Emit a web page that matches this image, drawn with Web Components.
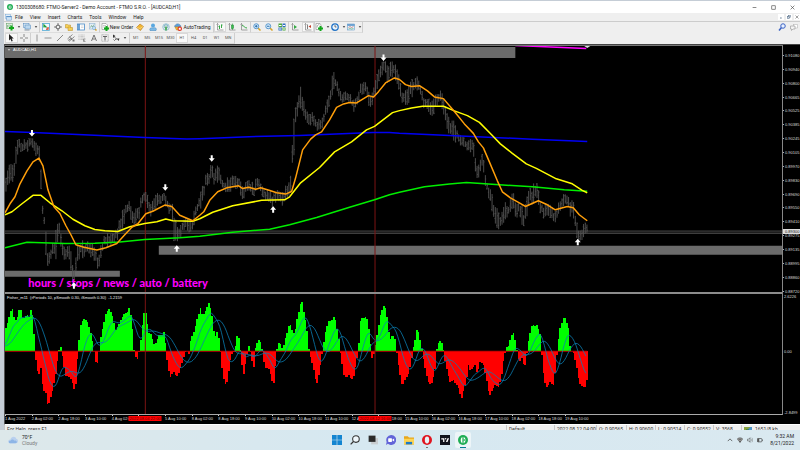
<!DOCTYPE html>
<html lang="en">
<head>
<meta charset="utf-8">
<title>FTMO-Server2 - [AUDCAD,H1]</title>
<style>
html, body { margin: 0; height: 100%; }
body { font: 5px/6px Roboto, "Noto Sans", sans-serif; color: #222; background: #c5cdd6; }
</style>
</head>
<body>
<desk-top></desk-top>
<script>
const define = (name, html) => customElements.define(name, class extends HTMLElement {
  connectedCallback() {
    if (this.shadowRoot) return;
    const root = this.attachShadow({ mode: "open" });
    const t = document.createElement("template");
    t.innerHTML = "<style>*{box-sizing:border-box}button{font:inherit;color:inherit;background:none;border:0;padding:0;margin:0}</style>" +
      (typeof html === "function" ? html(this) : html);
    root.append(t.content.cloneNode(true));
  }
});

/* ---------- icons, drawn on a 16 x 16 grid ---------- */
const glass = s => `<path d="M10 10l5 5" stroke="#d6a326" stroke-width="3"/><circle cx="6.5" cy="6.5" r="5" fill="#d5ebfa" stroke="#3f87c4" stroke-width="1.6"/><path d="${s}" stroke="#1d62a8" stroke-width="1.8"/>`;
const plus = (x, y) => `<path d="M${x} ${y - 5}v10M${x - 5} ${y}h10" stroke="#12a81c" stroke-width="4"/>`;
const axes = `<path d="M3 1v13h12M1 3l2-2 2 2" fill="none" stroke="#777" stroke-width="1.3"/>`;
const I = {
  logo: `<circle cx="8" cy="8" r="8" fill="#1fae55"/><path d="M7 3C3.500 4 3.500 12 7 13zM9 3c4 1 4 9 0 10z" fill="#fff"/><path d="M9 6l3 2-3 2z" fill="#1fae55"/>`,
  child: `<rect x="1" y="1" width="11" height="9" fill="#e8f3fc" stroke="#6ba2d6"/><rect x="4" y="5" width="11" height="9" fill="#cfe3f5" stroke="#4b86c3"/><path d="M4 6h11" stroke="#4b86c3" stroke-width="2"/>`,
  newchart: `<rect x="1" y="1" width="12" height="10" fill="#dff0df" stroke="#5a9a60"/><path d="M3 9V4m3 4V3m3 4V4" stroke="#4a8a50"/>${plus(11, 10)}`,
  profile: `<rect x="1" y="1" width="11" height="8" fill="#d9e9f7" stroke="#4c86bd"/><rect x="4" y="4" width="11" height="8" fill="#bcd8ef" stroke="#4c86bd"/><path d="M3 14h10" stroke="#8b98a5" stroke-width="2"/>`,
  market: `<rect x="1" y="1" width="14" height="14" fill="#eef8fd" stroke="#4aa6d2" stroke-width="1.500"/><path d="M4 9V4l5 5" stroke="#1b9b33" stroke-width="2.5" fill="none"/><path d="M12 8v4H8" stroke="#d63b24" stroke-width="2.500" fill="none"/>`,
  target: `<circle cx="8" cy="8" r="4" fill="none" stroke="#555" stroke-width="1.6"/><path d="M8 0v6M8 10v6M0 8h6M10 8h6" stroke="#555" stroke-width="1.5"/>`,
  navigator: `<path d="M1 3h4l1 1h5v6H1z" fill="#f5cf58" stroke="#b98a1d"/><path d="M6 8h4l1 1h4v6H6z" fill="#f5cf58" stroke="#b98a1d"/>`,
  terminal: `<rect x="1" y="2" width="14" height="12" fill="#fff" stroke="#3f84c4" stroke-width="1.500"/><path d="M4 2v12" stroke="#3f84c4" stroke-width="3"/><path d="M8 6h5M8 9h5" stroke="#bbb"/>`,
  tester: `<rect x="1" y="1" width="11" height="11" fill="#e1eef8" stroke="#7ea9cd"/><path d="M3 9l2-4 2 3 3-5" stroke="#4b8a4b" fill="none"/><path d="M12 12l3 3" stroke="#d6a326" stroke-width="3"/><circle cx="10" cy="10" r="3" fill="#d9eefb" stroke="#4f8dc0"/>`,
  order: `<path d="M2 1h8l3 3v9H2z" fill="#fff" stroke="#777"/><path d="M4 5h6M4 8h5" stroke="#999"/>${plus(11, 11)}`,
  diamond: `<path d="M1 9l7-7 7 5-6 8z" fill="#f2b632" stroke="#a8690c"/><path d="M2 9l6 2 6-4" stroke="#fff0b0" fill="none"/>`,
  cloud: `<circle cx="8" cy="5" r="4" fill="#58a7e0"/><path d="M2 15c-2-5 3-6 6-5 5-2 8 1 6 5z" fill="#7dbbe8" stroke="#397fb8"/>`,
  signal: `<circle cx="8" cy="8" r="6.500" fill="none" stroke="#7bb5c9" stroke-width="1.500"/><circle cx="8" cy="7" r="3.500" fill="none" stroke="#579bb5" stroke-width="1.500"/><path d="M8 7v8" stroke="#36a444" stroke-width="3"/>`,
  auto: `<path d="M1 7c2-7 11-7 13 0z" fill="#5a9fdc" stroke="#2f71aa"/><path d="M2 8h11l-3 6H5z" fill="#f1bf43" stroke="#b17e13"/><circle cx="11.500" cy="11.500" r="4.500" fill="#de2d1c"/><rect x="9.500" y="9.500" width="4" height="4" fill="#fff"/>`,
  bars: `${axes}<path d="M7 12V5M5 7h2M11 10V3m0 1h2" stroke="#20a031" stroke-width="1.8"/>`,
  candles: `${axes}<path d="M9 1v13" stroke="#15862a"/><rect x="7" y="4" width="4" height="7" fill="#3ebd53" stroke="#15862a"/>`,
  line: `${axes}<path d="M4 5c4 0 5 5 10 5" stroke="#20a031" stroke-width="1.8" fill="none"/>`,
  zoomin: glass("M4 6.500h5M6.500 4v5"), zoomout: glass("M4 6.500h5"),
  tile: `<rect width="7" height="7" x="1" y="1" fill="#4ba83f"/><rect x="9" y="1" width="6" height="7" fill="#2f6fc0"/><rect x="1" y="9" width="7" height="6" fill="#2f6fc0"/><rect x="9" y="9" width="6" height="6" fill="#4ba83f"/><path d="M2 5h5M10 5h4M2 12h5M10 12h4" stroke="#fff" stroke-width="2"/>`,
  scroll: `${axes}<path d="M6 4l6 4-6 4z" fill="#35a943"/>`,
  shift: `${axes}<path d="M7 3v9" stroke="#555" stroke-width="1.500"/><path d="M14 4v6L9 7z" fill="#c43e2a"/>`,
  indicators: `<path d="M2 1h8l2 3v9H2z" fill="#fff" stroke="#777"/><path d="M4 9c1-6 3-6 5-5" stroke="#555" fill="none"/>${plus(11, 11)}`,
  clock: `<circle cx="8" cy="8" r="6.500" fill="#eaf5ff" stroke="#2373c5" stroke-width="2.500"/><path d="M8 4v4h3" stroke="#333" fill="none" stroke-width="1.300"/>`,
  template: `<rect x="1" y="2" width="14" height="12" fill="#e4f1fb" stroke="#4f8fc7"/><path d="M1 4h14" stroke="#4f8fc7" stroke-width="3"/><path d="M3 9l3-2 3 2 4-2" stroke="#c0392b" fill="none"/><path d="M3 12l3-1 3 1 4-1" stroke="#2b9340" fill="none"/>`,
  cursor: `<path d="M4 0v13l3-3 2 5 2.500-1-2-5h4z" fill="#222"/>`,
  cross: `<path d="M8 0v6M8 10v6M0 8h6M10 8h6" stroke="#666" stroke-width="1.500"/>`,
  vline: `<path d="M8 1v14" stroke="#777" stroke-width="1.500"/>`,
  hline: `<path d="M1 8h14" stroke="#777" stroke-width="1.500"/>`,
  trend: `<path d="M2 14L14 2" stroke="#666" stroke-width="1.500"/>`,
  channel: `<path d="M1 10L11 1M4 15L15 5M2 13l8-5M5 5l5 7" stroke="#555" stroke-width="1.300"/><path d="M11 11h4v4h-4z" fill="#777"/>`,
  fibo: `<path d="M1 2h13M1 5h13M1 8h13M1 11h9" stroke="#888" stroke-dasharray="1.500 1"/><path d="M11 10h4M11 12.500h3M11 15h4M11 10v5" stroke="#555"/>`,
  text: `<path d="M3 14L8 2l5 12M5 10h6" stroke="#666" stroke-width="1.800" fill="none"/>`,
  label: `<rect x="1.500" y="1.500" width="13" height="13" fill="none" stroke="#777" stroke-dasharray="2 1"/><path d="M4 5h8M8 5v8" stroke="#555" stroke-width="1.800"/>`,
  arrows: `<path d="M2 1l5 3-5 4zM10 9h5l-2 5z" fill="#333"/><path d="M5 6l6 6M3 11l2 2 4-4" stroke="#444" stroke-width="1.500" fill="none"/>`,
  find: `<path d="M7 9l-5 6" stroke="#3a62c4" stroke-width="3"/><circle cx="10" cy="6" r="4.500" fill="#e9f1ff" stroke="#3a62c4" stroke-width="2"/>`,
  chat: `<path d="M6 3h9v7H9l-2 2V3z" fill="#fff" stroke="#aaa"/><path d="M1 6h9v6H6l-3 3v-3H1z" fill="#f4f4f4" stroke="#999" stroke-width="1.300"/>`,
  min: `<path d="M2 8h12" stroke="#444" stroke-width="2"/>`,
  max: `<rect x="2.500" y="2.500" width="11" height="11" fill="none" stroke="#444" stroke-width="2"/>`,
  close: `<path d="M2 2l12 12M14 2L2 14" stroke="#444" stroke-width="2"/>`,
  cmin: `<path d="M4 12h7" stroke="#4a6480" stroke-width="3"/>`,
  cmax: `<rect x="6" y="2" width="8" height="7" fill="none" stroke="#4a6480" stroke-width="2"/><rect x="2" y="6" width="8" height="8" fill="#cdd8e4" stroke="#4a6480" stroke-width="2"/>`,
  weather: `<path d="M3 13c-4-1-3-6 1-6 1-6 9-5 9-1 4 0 4 7 0 7z" fill="#b9d0ee"/><path d="M3 13c-3-1-2-4 1-4 2-3 5-2 6 0 4-1 6 4 2 4z" fill="#8db5e6"/>`,
  windows: `<path d="M0 0h7.500v7.500H0zM8.500 0H16v7.500H8.500zM0 8.500h7.500V16H0zM8.500 8.500H16V16H8.500z" fill="#1485d1"/>`,
  search: `<circle cx="9.500" cy="6.500" r="5.300" fill="#eef6fb" stroke="#333" stroke-width="1.700"/><path d="M5.500 10.500L1 15" stroke="#333" stroke-width="2"/>`,
  tasks: `<rect x="5" y="5" width="11" height="10" fill="#c9cdd0"/><rect x="1" y="1" width="11" height="10" fill="#2b2b2b"/>`,
  teams: `<path d="M8 0a8 8 0 1 1-5 14l-3 2 1-5A8 8 0 0 1 8 0z" fill="#6264d8"/><rect x="3.500" y="5" width="6" height="6" rx="1" fill="#fff"/><path d="M10 7.500l3-2v5l-3-2z" fill="#fff"/>`,
  folder: `<path d="M0 2h6l2 2h8v11H0z" fill="#e7a71c"/><path d="M0 6h16v9H0z" fill="#fcd454"/><path d="M3 11h10v4H3z" fill="#1c79c8"/>`,
  opera: `<ellipse cx="8" cy="8" rx="8" ry="8" fill="#e0141f"/><ellipse cx="8" cy="8" rx="3.500" ry="5.500" fill="#e9f2f6"/>`,
  tv: `<rect width="16" height="16" fill="#10131c"/><path d="M2 5h5v6H5V7H2zM12 11h-2.500L12 5h2.500z" fill="#fff"/><circle cx="9" cy="6" r="1.200" fill="#fff"/>`,
  up: `<path d="M2 11l6-6 6 6" stroke="#444" stroke-width="2" fill="none"/>`,
  wifi: `<path d="M0 6c5-5 11-5 16 0l-8 9z" fill="#999"/><path d="M0 6c5-5 11-5 16 0M3 9c3-3 7-3 10 0" stroke="#444" stroke-width="1.500" fill="none"/><circle cx="8" cy="12.500" r="2" fill="#333"/>`,
  sound: `<path d="M1 6h3l4-4v12l-4-4H1z" fill="none" stroke="#444" stroke-width="1.500"/><path d="M11 5c2 2 2 4 0 6M13 2c3 4 3 8 0 12" stroke="#777" fill="none" stroke-width="1.300"/>`,
  battery: `<rect x="1" y="4" width="12" height="9" rx="2" fill="none" stroke="#333" stroke-width="1.600"/><path d="M1 4h5v9H1z" fill="#555"/><path d="M15 7v3" stroke="#333" stroke-width="2"/>`,
  net: `<path d="M0 2h16v12H0z" fill="#4d94c8"/><path d="M0 2h13L0 12z" fill="#8aa43e"/><path d="M2 12v-4M5 12V7M8 12V6" stroke="#2f6c2a" stroke-width="2"/>`,
  caret: `<path d="M3 5h10l-5 6z" fill="#222"/>`
};
define("ui-icon", el => `<style>:host{display:block;flex:none;width:8px;height:8px}svg{display:block;width:100%;height:100%}</style><svg viewBox="0 0 16 16" fill="none">${I[el.getAttribute("name")]}</svg>`);

define("tool-button", el => {
  const n = el.getAttribute("name"), menu = el.hasAttribute("menu");
  return `<style>:host{display:flex;flex:1;min-width:0}
  button{flex:1;display:flex;align-items:center;justify-content:center;gap:1px;height:10px;white-space:nowrap;color:inherit}
  :host([pressed]) button{background:#f9f9f9;box-shadow:inset 0 0 0 1px #d9d9d9}
  .c{width:4px;height:4px;margin-left:2px}</style>
  <button aria-label="${n || el.textContent}">${n ? `<ui-icon name="${n}"></ui-icon>` : ""}<slot></slot>${menu ? '<ui-icon class="c" name="caret"></ui-icon>' : ""}</button>`;
});

define("tool-group", `<style>:host{display:flex;flex:none;height:11px;align-items:center;border-right:1px solid #cfcfcf;border-bottom:1px solid #ddd}</style><slot></slot>`);

define("title-bar", `<style>:host{display:flex;align-items:center;gap:3px;height:12px;padding:0 3px;background:#fff;color:#222}
 ui-icon{width:6px;height:6px}b{font-weight:400;flex:1;white-space:nowrap}nav{display:flex;gap:9px}nav ui-icon{width:5px;height:5px}
 nav button{width:10px;display:flex;justify-content:center}</style>
 <ui-icon name="logo"></ui-icon><b><slot></slot></b>
 <nav><button aria-label="Minimize"><ui-icon name="min"></ui-icon></button><button aria-label="Maximize"><ui-icon name="max"></ui-icon></button><button aria-label="Close"><ui-icon name="close"></ui-icon></button></nav>`);

define("menu-bar", `<style>:host{display:flex;align-items:center;height:9px;padding-left:1px;border-bottom:1px solid #ccc;background:#efefef}
 :host>ui-icon{width:7px;height:7px;margin-right:3px}nav{display:flex;gap:7px;flex:1}
 div{display:flex;gap:2px}div button{width:6px;height:6px;background:#fff}div ui-icon{width:4px;height:4px;margin:0 1px}</style>
 <ui-icon name="child"></ui-icon>
 <nav>${["File", "View", "Insert", "Charts", "Tools", "Window", "Help"].map(t => `<button>${t}</button>`).join("")}</nav>
 <div><button aria-label="Minimize chart"><ui-icon name="cmin"></ui-icon></button><button aria-label="Restore chart"><ui-icon name="cmax"></ui-icon></button><button aria-label="Close chart"><ui-icon name="close"></ui-icon></button></div>`);

const btn = n => n.split(" ").map(x => `<tool-button name="${x.replace("*", "")}"${x.endsWith("*") ? " menu" : ""}></tool-button>`).join("");
define("tool-bars", `<style>:host{display:block;background:#efefef}section{display:flex;height:11px;padding-left:1px}
 .end{margin-left:auto;display:flex;width:24px}
 .a{width:35px}.b{width:60px}.c{width:114px}.d{width:37px}.e{width:38px}.f{width:26px}.g{width:48px}.h{width:26px}.i{width:99px}.j{width:105px}
 .c tool-button:nth-child(1){flex:none;width:34px}.c tool-button:last-child{flex:none;width:41px}
 .i tool-button:last-child{flex:none;width:18px}.j{font-size:4px}.j tool-button{color:#555}</style>
 <section>
 <tool-group class="a">${btn("newchart* profile*")}</tool-group>
 <tool-group class="b">${btn("market target navigator terminal tester")}</tool-group>
 <tool-group class="c"><tool-button name="order">New Order</tool-button>${btn("diamond cloud signal")}<tool-button name="auto">AutoTrading</tool-button></tool-group>
 <tool-group class="d"><tool-button name="bars" pressed></tool-button>${btn("candles line")}</tool-group>
 <tool-group class="e">${btn("zoomin zoomout tile")}</tool-group>
 <tool-group class="f">${btn("scroll")}<tool-button name="shift" pressed></tool-button></tool-group>
 <tool-group class="g">${btn("indicators* clock* template*")}</tool-group>
 <span class="end">${btn("find chat")}</span>
 </section>
 <section>
 <tool-group class="h"><tool-button name="cursor" pressed></tool-button>${btn("cross")}</tool-group>
 <tool-group class="i">${btn("vline hline trend channel fibo text label arrows*")}</tool-group>
 <tool-group class="j">${["M1", "M5", "M15", "M30", "H1", "H4", "D1", "W1", "MN"].map(t => `<tool-button${t === "H1" ? " pressed" : ""}>${t}</tool-button>`).join("")}</tool-group>
 </section>`);

/* ---------- chart data ---------- */
const STEP = 5 / 3, FIRST = 6, LAST = 588;
/* x, high, low; vertical values are thirds of a unit below 60 */
const RANGE = [[5,390,405],[8,300,380],[11,315,365],[14,310,360],[17,230,320],[19,225,265],[22,250,280],[26,235,275],[29,240,265],[32,222,255],[34,240,280],[37,260,285],[39,255,280],[41,300,440],[43,440,485],[45,480,500],[46,500,590],[48,580,620],[51,560,600],[54,550,580],[57,500,600],[59,460,520],[62,540,590],[65,560,610],[68,550,590],[70,560,600],[72,580,660],[74,640,680],[76,590,640],[78,560,610],[81,535,600],[84,550,595],[88,540,590],[92,555,590],[95,550,600],[98,580,650],[101,560,590],[104,530,560],[108,525,560],[112,520,550],[115,520,545],[118,490,540],[121,470,520],[124,440,490],[127,425,465],[130,420,470],[133,450,500],[136,450,495],[139,430,480],[142,400,440],[145,400,425],[148,405,450],[151,430,465],[154,415,460],[158,405,430],[162,400,430],[165,390,425],[168,420,455],[171,430,460],[174,430,540],[177,480,560],[180,500,540],[183,480,510],[186,470,510],[190,480,515],[193,480,515],[196,430,480],[199,410,455],[203,380,440],[206,345,380],[209,330,380],[212,305,350],[215,340,375],[218,305,370],[221,340,385],[224,365,390],[227,360,395],[230,345,400],[233,340,380],[236,350,385],[239,345,375],[242,380,425],[245,370,410],[248,350,390],[251,365,400],[254,370,420],[257,345,385],[260,365,390],[263,385,415],[267,395,420],[270,390,430],[273,400,440],[276,390,430],[280,390,420],[283,400,435],[286,380,420],[289,370,405],[292,325,390],[293,120,340],[294,120,330],[296,130,190],[298,110,170],[301,85,150],[304,120,160],[306,150,180],[309,165,205],[312,155,185],[315,170,195],[318,185,210],[321,180,205],[324,155,200],[326,130,170],[329,110,145],[331,80,130],[334,25,85],[336,45,90],[339,75,115],[342,100,125],[345,100,130],[348,95,120],[352,110,140],[355,125,155],[358,100,135],[361,70,105],[364,70,100],[367,70,100],[370,100,145],[373,100,140],[376,60,100],[379,35,75],[382,10,50],[385,0,30],[388,20,70],[391,5,50],[395,10,50],[399,40,80],[402,85,130],[405,90,130],[408,85,135],[411,70,115],[414,50,110],[418,45,90],[421,75,100],[424,110,140],[428,120,150],[432,130,170],[436,110,150],[440,90,130],[443,95,150],[446,130,190],[449,170,230],[452,180,220],[455,190,245],[458,210,245],[462,230,260],[466,240,265],[470,235,275],[474,245,275],[476,290,350],[479,310,355],[482,280,320],[484,285,330],[486,340,380],[489,380,410],[492,400,440],[495,430,490],[498,450,515],[501,470,500],[504,410,500],[507,440,480],[510,430,470],[514,390,450],[517,440,480],[520,420,460],[524,450,510],[527,420,480],[530,390,440],[534,370,430],[538,375,420],[541,420,455],[544,440,470],[548,430,470],[552,440,480],[555,460,500],[558,440,480],[561,420,455],[564,405,440],[568,400,435],[571,430,465],[574,420,480],[577,480,530],[579,510,540],[583,500,535],[588,490,520]];
/* x, height in thirds of a unit above the zero line */
const FISHER = [[5,60],[9,100],[12,133],[15,90],[17,95],[20,133],[23,92],[27,112],[29,100],[31,125],[33,100],[34,60],[35,-10],[37,-55],[39,-70],[41,-50],[43,-115],[46,-125],[48,-172],[50,-145],[53,-115],[56,-65],[58,-15],[59,1],[60,28],[61,10],[62,-5],[64,-45],[66,-78],[68,-72],[72,-90],[75,-122],[77,-60],[78,15],[80,50],[81,85],[84,98],[87,90],[90,65],[92,40],[94,5],[95,-20],[97,-50],[98,-20],[100,15],[101,50],[103,70],[106,115],[109,128],[112,110],[114,85],[116,60],[118,75],[121,95],[124,110],[127,115],[129,130],[131,105],[133,50],[134,5],[135,-15],[138,-27],[139,-5],[140,10],[142,70],[143,90],[145,132],[147,90],[149,55],[152,50],[153,20],[156,25],[159,50],[162,45],[165,60],[166,15],[167,-5],[168,-50],[171,-78],[174,-60],[177,-78],[180,-60],[183,-30],[185,-8],[187,3],[189,-12],[190,8],[191,35],[194,55],[197,90],[201,132],[203,105],[205,115],[209,145],[212,120],[214,60],[216,45],[218,60],[220,25],[221,-10],[222,-40],[225,-102],[228,-90],[230,-35],[232,-12],[234,-3],[236,18],[238,55],[240,30],[241,-5],[243,-55],[244,-70],[246,-35],[248,1],[249,18],[251,-5],[253,-40],[254,-55],[255,-10],[256,15],[259,35],[262,20],[263,-12],[265,-50],[268,-50],[270,-55],[272,-85],[274,-98],[276,-40],[277,-5],[278,20],[280,28],[283,5],[285,30],[288,60],[290,85],[293,60],[295,50],[297,90],[300,130],[302,156],[304,120],[306,90],[308,50],[309,10],[310,-10],[313,-40],[317,-100],[320,-60],[322,-15],[323,1],[324,25],[326,60],[329,90],[332,90],[335,107],[337,75],[339,40],[341,-10],[344,-70],[347,-80],[349,-72],[352,-85],[354,-75],[356,-45],[358,-10],[359,20],[361,98],[364,98],[367,104],[369,70],[371,15],[372,-22],[374,-10],[376,20],[378,60],[381,110],[385,142],[388,95],[390,30],[393,50],[396,35],[397,5],[398,-20],[400,-60],[403,-107],[406,-85],[409,-70],[412,-35],[413,-3],[414,10],[416,35],[418,72],[420,45],[422,15],[424,-20],[427,-70],[430,-100],[433,-95],[436,-50],[437,-5],[438,20],[442,34],[443,15],[444,8],[445,-20],[448,-60],[451,-95],[454,-85],[457,-100],[460,-115],[462,-147],[464,-120],[467,-90],[469,-40],[471,-60],[473,-50],[476,-40],[478,-70],[481,-30],[484,-40],[487,-80],[490,-137],[493,-115],[496,-100],[499,-110],[502,-80],[504,-30],[506,-4],[507,10],[509,15],[512,45],[514,57],[516,30],[518,-5],[520,-40],[522,-15],[524,-35],[525,-57],[527,-20],[528,10],[530,45],[533,82],[536,75],[538,78],[541,50],[542,5],[543,-30],[545,-90],[548,-110],[551,-90],[554,-105],[556,-60],[558,5],[560,60],[563,90],[565,108],[568,80],[570,60],[571,5],[574,-5],[576,-30],[578,-60],[580,-95],[583,-105],[586,-108],[588,-80]];
const at = (data, x, k) => {
  let i = 1;
  while (i < data.length - 1 && data[i][0] < x) i++;
  const a = data[i - 1], b = data[i], t = Math.min(1, Math.max(0, (x - a[0]) / (b[0] - a[0])));
  return a[k] + (b[k] - a[k]) * t;
};
let seed = 11;
const rnd = () => (seed = (seed * 16807) % 2147483647) / 2147483647;
const f = n => n.toFixed(1);

let candles = "";
for (let x = FIRST; x < LAST; x += STEP) {
  const hi = 60 + at(RANGE, x, 1) / 3, lo = 60 + at(RANGE, x, 2) / 3, d = lo - hi;
  const t = hi + d * rnd() * .45 - 2, b = lo - d * rnd() * .45 + 2;
  candles += `M${f(x)} ${f(t)}V${f(b)}M${f(x - .8)} ${f(t + (b - t) * rnd())}h.8M${f(x)} ${f(t + (b - t) * rnd())}h.8`;
}
let green = "", red = "", fast = "", slow = "";
const e = [15, 15, 15, 15];
for (let x = 5; x < LAST; x += STEP) {
  const v = at(FISHER, x + .8, 1), h = Math.abs(v) / 3;
  if (v > 0) green += `M${f(x)} 351V${f(351 - h)}h1.700V351z`; else red += `M${f(x)} 350.500V${f(351 + h)}h1.700V350.500z`;
  let s = v;
  for (let k = 0; k < 4; k++) s = e[k] += (s - e[k]) * .3;
  fast += `${f(x)} ${f(351 - e[1] / 3)} `; slow += `${f(x)} ${f(351 - e[3] / 3)} `;
}
const arrow = (x, y, up) => `<g transform="translate(${x} ${y})${up ? " scale(1 -1)" : ""}"><path d="M-1-3h2v3h2L0 3.500-3 0h2z" fill="#fff"/></g>`;
const averages = {
  "#0000f5": "5 131.5 33 132.5 145 137.5 187 139.2 200 138.8 243 137 300 135.5 373 132.7 390 132.500 400 133.3 450 135.7 533 139.3 588 141.7",
  "#00ee00": "5 248 27 242.5 65 243.7 95 243.5 120 242.3 145 239.7 180 238 200 236.5 233 232.5 270 229.5 290 225 317 217.7 350 207.5 375 200 390 195 400 192.5 425 187 450 184.3 467 182.7 500 185 533 187 565 190 588 191.5",
  "#ffff00": "5 215 12 212 22 204 33 195.5 41 195.5 50 203 62 211 73 219.5 85 226 95 229.7 105 231 118 231.7 130 227 145 223.7 157 222 166 219.3 173 221 193 221.5 200 219 213 212.5 233 206 262 200.5 285 200 290 197 301 183 320 167.7 335 152 352 142 367 130 375 126.5 393 112.7 400 110.7 412 108 423 106.3 444 106.3 455 111 468 115.7 480 122.5 492 134.7 501 144 513 153.5 527 164 537 168.5 557 179 573 184 583 190.5 588 193",
  "#ff9f0a": "5 213 10 204 15 197 20 184 27 171 33 162 39 158.3 43 166 48 190 54 207 60 213.7 66 226 71 235 76 245 84 247.5 97 250.3 106 248 117 243.7 124 236 132 227.5 138 224 146 214 153 211.5 165 205.3 172 206.7 180 215.5 193 221 200 215.5 204 212 210 200.5 218 192 227 188 239 186 243 188.7 249 187.5 256 189.5 261 188 271 191 277 193 286 194.3 292 191.7 296 178 303 150 311 139.3 316 135 322 132 330 120 337 107.5 344 104 350 102.5 357 103 369 95.7 374 97 379 91.7 386 83 395 78 400 79.5 406 84.7 412 86.5 420 85.7 428 91 435 97 444 98.7 455 111.5 465 124 474 133.5 479 142 484 148 490 162 498 181 503 192 511 198 520 203 526 206.7 539 201 548 205 556 210 568 206.7 574 208 580 215 588 221"
};
const sessions = `<path d="M145.500 40V420M375.500 40V420" stroke="#7c1414" stroke-width="1"/>`;

define("price-pane", `<style>:host{display:block;position:relative;min-height:0;border-bottom:2px solid #8c8c8c;overflow:hidden}
 svg{position:absolute;inset:0;width:100%;height:100%}
 .name{position:absolute;left:2px;top:1px;display:flex;align-items:center;gap:2px;font:4px/5px "Liberation Sans",sans-serif;color:#fff}.name ui-icon{width:4px;height:4px;filter:invert(1)}
 .note{position:absolute;left:3%;bottom:2px;font:900 11px/14px Lato,"Liberation Sans",sans-serif;color:#f0f;white-space:nowrap}</style>
 <svg viewBox="5 46 778 246" preserveAspectRatio="none" fill="none">
 <path d="M5 47H516V58H5zM159 246H783V255H159zM5 271H120V277H5z" fill="#6b6b6b"/>
 <path d="M5 231.500H783" stroke="#2b2b2b" stroke-width="2"/><path d="M5 233.500H783" stroke="#555"/>
 ${sessions}
 <path d="${candles}" stroke="#555" stroke-width=".9"/>
 ${Object.entries(averages).map(([c, p]) => `<polyline points="${p}" stroke="${c}" stroke-width="1.500" stroke-linejoin="round"/>`).join("")}
 <path d="M516 45.500L587 48.500" stroke="#f0f" stroke-width="1.500"/><path d="M585 46h6l-3 2z" fill="#ddd"/>
 ${arrow(32, 133)}${arrow(165.5, 187.5)}${arrow(212, 158.5)}${arrow(384, 57.5)}${arrow(177, 249, 1)}${arrow(273.5, 210, 1)}${arrow(578.5, 242.5, 1)}
 </svg>
 <span class="name"><ui-icon name="caret"></ui-icon>AUDCAD,H1</span><span class="note">hours / stops / news / auto / battery</span>
 <svg viewBox="5 46 778 246" preserveAspectRatio="none">${arrow(74, 286, 1)}</svg>`);

define("fisher-pane", `<style>:host{display:block;position:relative;min-height:0;border-bottom:1px solid #aaa}
 svg{position:absolute;inset:0;width:100%;height:100%}
 span{position:absolute;left:2px;top:1px;font:4px/5px "Liberation Sans",sans-serif;color:#eee;white-space:pre}</style>
 <svg viewBox="5 294 778 120" preserveAspectRatio="none" fill="none">
 <path d="${green}" fill="#0f0" shape-rendering="crispEdges"/><path d="${red}" fill="#f00" shape-rendering="crispEdges"/><path d="M5 351H588" stroke="#c00000" stroke-width="1"/>
 <polyline points="${fast}" stroke="#0b7cb0" stroke-width=".8"/><polyline points="${slow}" stroke="#0b7cb0" stroke-width=".8"/>
 ${sessions}</svg><span>Fisher_m11  (rPeriods 10, pSmooth 0.30, iSmooth 0.30)  -1.2159</span>`);

const prices = "0.91080 0.90940 0.90800 0.90665 0.90525 0.90385 0.90245 0.90105 0.89970 0.89830 0.89690 0.89550 0.89410 0.89275 0.89135 0.88995 0.88860 0.88720".split(" ");
define("price-scale", `<style>:host{display:flex;flex-direction:column;justify-content:space-between;position:relative;padding:8px 0 0;overflow:hidden}
 span{display:flex;align-items:center;gap:1px;height:5px}span::before{content:"";width:1px;height:1px;background:#aaa}
 b{position:absolute;left:0;right:0;top:74%;height:5px;padding-left:2px;background:#ddd;color:#111;font-weight:400}</style>
 ${prices.map(p => `<span>${p}</span>`).join("")}<b>0.89300</b>`);
define("fisher-scale", `<style>:host{display:flex;flex-direction:column;justify-content:space-between;padding:0 0 0 1px}span:nth-of-type(2){margin-bottom:5px}</style><span>2.6226</span><span>0.00</span><span>-2.8499</span>`);

const dates = "1 Aug 2022|2 Aug 02:00|2 Aug 18:00|3 Aug 10:00|4 Aug 02:00||5 Aug 10:00|8 Aug 02:00|8 Aug 18:00|9 Aug 10:00|10 Aug 02:00|10 Aug 18:00|11 Aug 10:00|12 Aug 02:00|12 Aug 18:00|15 Aug 10:00|16 Aug 02:00|16 Aug 18:00|17 Aug 10:00|18 Aug 02:00|18 Aug 18:00|19 Aug 10:00".split("|");
define("time-scale", `<style>:host{display:block;position:relative;height:9px}
 div{display:grid;grid-template-columns:repeat(22,minmax(0,1fr));width:75.4%}span{white-space:nowrap;min-width:0;padding-top:1px;position:relative}
 span::before{content:"";position:absolute;left:0;top:0;width:1px;height:1px;background:#ccc}
 b{position:absolute;top:1px;width:33px;height:5px;background:#f00;color:#600;font-weight:400;text-align:center;white-space:nowrap;transform:translateX(-50%)}</style>
 <div>${dates.map(d => `<span>${d}</span>`).join("")}</div><b style="left:18%">2022.08.04 22:00</b><b style="left:47.6%">2022.08.12 16:00</b>`);

define("chart-window", `<style>:host{display:grid;flex:1;min-height:0;background:#000;border-top:1px solid #444;border-left:1px solid #555;border-bottom:1px solid #fff;
 grid-template:minmax(0,248fr) minmax(0,121fr) 9px/minmax(0,1fr) 17px;font:4px/5px "Liberation Sans",sans-serif;color:#ddd}
 price-pane{border-top:1px solid #777}price-pane,fisher-pane{border-right:1px solid #888}</style>
 <price-pane></price-pane><price-scale></price-scale><fisher-pane></fisher-pane><fisher-scale></fisher-scale><time-scale></time-scale>`);

define("status-bar", `<style>:host{display:grid;grid-template-columns:minmax(0,1fr) 48px 42px 30px 29px 29px 29px 28px 59px;height:5px;overflow:hidden;background:#efefef;color:#333}
 span{display:flex;gap:3px;white-space:nowrap;padding:1px 0 0 2px;border-left:1px solid #c8c8c8;height:9px}span:first-child{border:0;padding-left:0}</style>
 <span>For Help, press F1</span><span>Default</span><span>2022.08.12 04:00</span><span>O: 0.90565</span><span>H: 0.90600</span><span>L: 0.90514</span><span>C: 0.90552</span><span>V: 3568</span><span><ui-icon name="net"></ui-icon>1651/8 kb</span>`);

define("task-bar", `<style>:host{display:grid;grid-template-columns:1fr auto 1fr;align-items:center;height:20px;background:linear-gradient(90deg,#dde8ea,#d6e8f1 45%,#dae9f0)}
 .w{display:flex;align-items:center;gap:4px;padding-left:8px;text-align:left}.w ui-icon{width:10px;height:10px}.w small{font:inherit;color:#777;display:block;line-height:7px}
 nav{display:flex;gap:2px}nav button{width:16px;height:16px;display:flex;flex-direction:column;align-items:center;justify-content:center;border-radius:2px;position:relative}
 nav ui-icon{width:10px;height:10px}nav .on{background:#edf5f8}
 nav i{position:absolute;bottom:0;width:2px;height:1px;background:#777}nav .on i{width:6px;background:#087b92}
 .t{display:flex;align-items:center;justify-content:flex-end;gap:4px;padding-right:6px}.t ui-icon{width:6px;height:6px}.t time{text-align:right;margin-left:3px;line-height:7px}</style>
 <button class="w"><ui-icon name="weather"></ui-icon><span>70°F<small>Cloudy</small></span></button>
 <nav>${["windows", "search", "tasks", "teams", "folder", "opera", "tv", "logo"].map((n, i) => `<button aria-label="${n}"${i === 7 ? ' class="on"' : ""}><ui-icon name="${n}"></ui-icon>${n === "opera" || i === 7 ? "<i></i>" : ""}</button>`).join("")}</nav>
 <div class="t"><ui-icon name="up"></ui-icon><ui-icon name="wifi"></ui-icon><ui-icon name="sound"></ui-icon><ui-icon name="battery"></ui-icon><time>9:32 AM<br>8/21/2022</time></div>`);

define("desk-top", `<style>:host{display:flex;flex-direction:column;height:100vh}main{flex:1;min-height:0;display:flex;flex-direction:column;margin:1px 0 0 4px}</style>
 <main><title-bar>1300308680: FTMO-Server2 - Demo Account - FTMO S.R.O. - [AUDCAD,H1]</title-bar>
 <menu-bar></menu-bar><tool-bars></tool-bars><chart-window></chart-window><status-bar></status-bar></main><task-bar></task-bar>`);
</script>
</body>
</html>
